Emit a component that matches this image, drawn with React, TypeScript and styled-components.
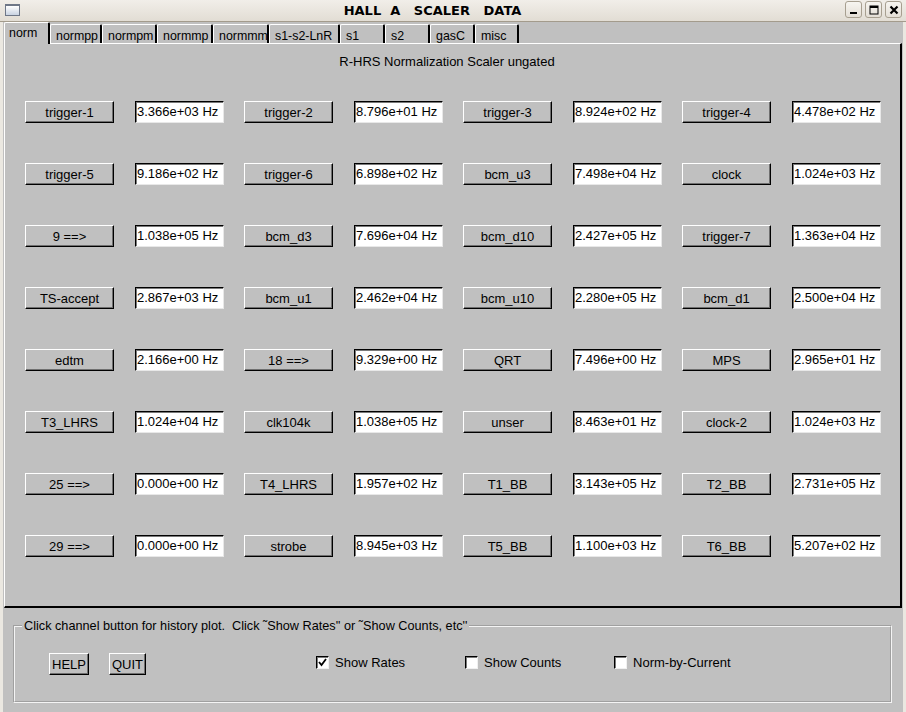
import React from 'react';
import styled, { createGlobalStyle } from 'styled-components';

const GlobalStyle = createGlobalStyle`
  html, body {
    margin: 0;
    padding: 0;
    background: #ebe8e1;
  }
  * {
    box-sizing: border-box;
  }
`;

interface Channel {
  name: string;
  value: string;
}

const channels: Channel[] = [
  { name: 'trigger-1', value: '3.366e+03 Hz' },
  { name: 'trigger-2', value: '8.796e+01 Hz' },
  { name: 'trigger-3', value: '8.924e+02 Hz' },
  { name: 'trigger-4', value: '4.478e+02 Hz' },
  { name: 'trigger-5', value: '9.186e+02 Hz' },
  { name: 'trigger-6', value: '6.898e+02 Hz' },
  { name: 'bcm_u3', value: '7.498e+04 Hz' },
  { name: 'clock', value: '1.024e+03 Hz' },
  { name: '9 ==>', value: '1.038e+05 Hz' },
  { name: 'bcm_d3', value: '7.696e+04 Hz' },
  { name: 'bcm_d10', value: '2.427e+05 Hz' },
  { name: 'trigger-7', value: '1.363e+04 Hz' },
  { name: 'TS-accept', value: '2.867e+03 Hz' },
  { name: 'bcm_u1', value: '2.462e+04 Hz' },
  { name: 'bcm_u10', value: '2.280e+05 Hz' },
  { name: 'bcm_d1', value: '2.500e+04 Hz' },
  { name: 'edtm', value: '2.166e+00 Hz' },
  { name: '18 ==>', value: '9.329e+00 Hz' },
  { name: 'QRT', value: '7.496e+00 Hz' },
  { name: 'MPS', value: '2.965e+01 Hz' },
  { name: 'T3_LHRS', value: '1.024e+04 Hz' },
  { name: 'clk104k', value: '1.038e+05 Hz' },
  { name: 'unser', value: '8.463e+01 Hz' },
  { name: 'clock-2', value: '1.024e+03 Hz' },
  { name: '25 ==>', value: '0.000e+00 Hz' },
  { name: 'T4_LHRS', value: '1.957e+02 Hz' },
  { name: 'T1_BB', value: '3.143e+05 Hz' },
  { name: 'T2_BB', value: '2.731e+05 Hz' },
  { name: '29 ==>', value: '0.000e+00 Hz' },
  { name: 'strobe', value: '8.945e+03 Hz' },
  { name: 'T5_BB', value: '1.100e+03 Hz' },
  { name: 'T6_BB', value: '5.207e+02 Hz' },
];

const tabs = [
  { label: 'norm', width: 46 },
  { label: 'normpp', width: 52 },
  { label: 'normpm', width: 55 },
  { label: 'normmp', width: 56 },
  { label: 'normmm', width: 56 },
  { label: 's1-s2-LnR', width: 71 },
  { label: 's1', width: 45 },
  { label: 's2', width: 45 },
  { label: 'gasC', width: 45 },
  { label: 'misc', width: 44 },
];

const App: React.FC = () => {
  return (
    <>
      <GlobalStyle />
      <Window>
        <TitleBar>
          <WindowIcon />
          <Title>HALL  A   SCALER   DATA</Title>
          <TitleButtons>
            <TitleButton aria-label="minimize">
              <svg width="10" height="10" viewBox="0 0 10 10">
                <rect x="1" y="7" width="7" height="2" fill="#000" />
              </svg>
            </TitleButton>
            <TitleButton aria-label="maximize">
              <svg width="10" height="10" viewBox="0 0 10 10">
                <rect x="1" y="1" width="8" height="8" fill="none" stroke="#000" strokeWidth="1" />
                <rect x="1" y="1" width="8" height="2" fill="#000" />
              </svg>
            </TitleButton>
            <TitleButton aria-label="close">
              <svg width="10" height="10" viewBox="0 0 10 10">
                <path d="M1.5 1.5 L8.5 8.5 M8.5 1.5 L1.5 8.5" stroke="#000" strokeWidth="2.2" />
              </svg>
            </TitleButton>
          </TitleButtons>
        </TitleBar>

        <Client>
          <Notebook>
            <TabRow>
              {tabs.map((t, i) => (
                <Tab key={t.label} $active={i === 0} $width={t.width}>
                  {t.label}
                </Tab>
              ))}
            </TabRow>
            <Panel>
              <Heading>R-HRS Normalization Scaler ungated</Heading>
              <ChannelGrid>
                {channels.map((c) => (
                  <ChannelCell key={c.name}>
                    <ChannelButton>{c.name}</ChannelButton>
                    <ValueEntry>{c.value}</ValueEntry>
                  </ChannelCell>
                ))}
              </ChannelGrid>
            </Panel>
          </Notebook>

          <Controls>
            <Legend>Click channel button for history plot.  Click ˜Show Rates'' or ˜Show Counts, etc''</Legend>
            <ControlRow>
              <SmallButton>HELP</SmallButton>
              <SmallButton>QUIT</SmallButton>
              <CheckGroup>
                <CheckItem>
                  <CheckBox>
                    <svg width="9" height="9" viewBox="0 0 9 9">
                      <path d="M1 4 L3.5 7 L8 1" fill="none" stroke="#000" strokeWidth="1.8" />
                    </svg>
                  </CheckBox>
                  Show Rates
                </CheckItem>
                <CheckItem>
                  <CheckBox />
                  Show Counts
                </CheckItem>
                <CheckItem>
                  <CheckBox />
                  Norm-by-Current
                </CheckItem>
              </CheckGroup>
            </ControlRow>
          </Controls>
        </Client>
      </Window>
    </>
  );
};

export default App;

const Window = styled.div`
  width: 906px;
  height: 712px;
  display: flex;
  flex-direction: column;
  background: #ebe8e1;
  font-family: 'Liberation Sans', Arial, sans-serif;
  font-size: 13px;
  color: #000;
  overflow: hidden;
`;

const TitleBar = styled.div`
  height: 22px;
  flex: none;
  display: flex;
  align-items: center;
  padding: 0 4px 0 5px;
  background: linear-gradient(#f1eee9, #e2ddd4);
  border-bottom: 1px solid #a39b8c;
`;

const WindowIcon = styled.div`
  width: 15px;
  height: 12px;
  margin-top: -2px;
  border: 1px solid #6e7787;
  border-top-width: 2px;
  background: linear-gradient(#ffffff, #c9d3e2);
`;

const Title = styled.div`
  flex: 1;
  text-align: center;
  white-space: pre;
  font-family: 'DejaVu Sans', sans-serif;
  font-weight: bold;
  font-size: 13px;
  margin-top: -1px;
`;

const TitleButtons = styled.div`
  display: flex;
  gap: 3px;
  margin-top: -2px;
`;

const TitleButton = styled.div`
  width: 17px;
  height: 17px;
  border: 1px solid #a79f90;
  border-radius: 3px;
  background: linear-gradient(#f7f5f1, #e4dfd6);
  display: flex;
  align-items: center;
  justify-content: center;
`;

const Client = styled.div`
  flex: 1;
  margin: 0 3px;
  background: #c0c0c0;
  display: flex;
  flex-direction: column;
`;

const Notebook = styled.div`
  display: flex;
  flex-direction: column;
  margin: 0 1px;
`;

const TabRow = styled.div`
  height: 21px;
  display: flex;
  align-items: flex-end;
  position: relative;
  z-index: 1;
`;

const Tab = styled.div<{ $active: boolean; $width: number }>`
  width: ${({ $width }) => $width}px;
  height: ${({ $active }) => ($active ? 22 : 19)}px;
  margin-bottom: ${({ $active }) => ($active ? -1 : 0)}px;
  padding: ${({ $active }) => ($active ? '3px 0 0 4px' : '4px 0 0 5px')};
  background: #c0c0c0;
  border-top: 1px solid #ffffff;
  border-left: 1px solid #ffffff;
  border-right: 2px solid #000;
  border-radius: 2px 2px 0 0;
  font-size: 12.4px;
  line-height: 14px;
  white-space: nowrap;
  overflow: hidden;
`;

const Panel = styled.div`
  height: 565px;
  border-top: 1px solid #ffffff;
  border-left: 1px solid #ffffff;
  border-right: 2px solid #000;
  border-bottom: 2px solid #000;
  padding: 11px 0 0 20px;
`;

const Heading = styled.div`
  text-align: center;
  font-size: 13px;
  line-height: 14px;
  padding-right: 31px;
`;

const ChannelGrid = styled.div`
  display: grid;
  grid-template-columns: repeat(4, 199px);
  column-gap: 20px;
  row-gap: 40px;
  margin-top: 32px;
`;

const ChannelCell = styled.div`
  display: flex;
  gap: 21px;
`;

const ChannelButton = styled.div`
  width: 89px;
  height: 22px;
  display: flex;
  align-items: center;
  justify-content: center;
  border: 1px solid;
  border-color: #ffffff #000 #000 #ffffff;
  box-shadow: inset -1px -1px #6f6f6f;
  white-space: nowrap;
`;

const ValueEntry = styled.div`
  width: 89px;
  height: 22px;
  background: #ffffff;
  border: 1px solid;
  border-color: #000 #e8e8e8 #e8e8e8 #000;
  box-shadow: inset 1px 1px #7a7a7a;
  padding: 2px 0 0 1px;
  line-height: 15px;
  white-space: nowrap;
`;

const Controls = styled.fieldset`
  margin: 11px 11px 9px 10px;
  padding: 0;
  flex: 1;
  border: 2px groove #f4f4f4;
  min-width: 0;
`;

const Legend = styled.legend`
  padding: 0 2px 0 2px;
  margin-left: 7px;
  font-size: 12.7px;
  line-height: 14px;
  white-space: pre;
`;

const ControlRow = styled.div`
  display: flex;
  align-items: center;
  gap: 20px;
  margin-top: 20px;
  padding-left: 34px;
`;

const SmallButton = styled.div`
  height: 22px;
  padding: 0 2px;
  display: flex;
  align-items: center;
  border: 1px solid;
  border-color: #ffffff #000 #000 #ffffff;
  box-shadow: inset -1px -1px #6f6f6f;
`;

const CheckGroup = styled.div`
  display: grid;
  grid-template-columns: repeat(3, 149px);
  margin-left: 150px;
  margin-top: -3px;
`;

const CheckItem = styled.div`
  display: flex;
  align-items: center;
  gap: 6px;
  white-space: nowrap;
`;

const CheckBox = styled.div`
  width: 13px;
  height: 13px;
  background: #ffffff;
  border: 1px solid;
  border-color: #000 #f0f0f0 #f0f0f0 #000;
  box-shadow: inset 1px 1px #7a7a7a;
  display: flex;
  align-items: center;
  justify-content: center;
`;
